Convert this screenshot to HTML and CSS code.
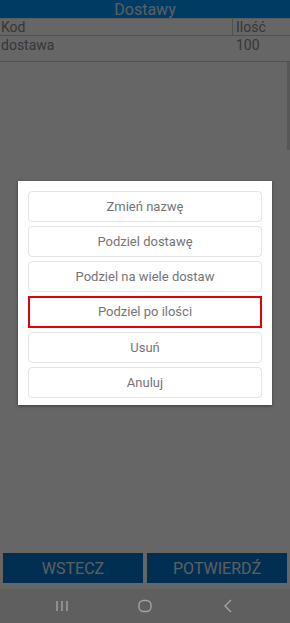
FILE: index.html
```html
<!DOCTYPE html>
<html>
    <head>
        <title>Dostawy</title>
        <link rel="stylesheet" href="styles.css">
    </head>
    <body>

        <div class="screen">

            <div class="app">
                <div class="title">Dostawy</div>

                <div class="table">
                    <div class="row head">
                        <div class="cell code">Kod</div>
                        <div class="cell qty">Ilość</div>
                    </div>
                    <div class="row">
                        <div class="cell code">dostawa</div>
                        <div class="cell qty">100</div>
                    </div>
                </div>

                <div class="spacer"></div>

                <div class="actions">
                    <div class="action">WSTECZ</div>
                    <div class="action">POTWIERDŹ</div>
                </div>

                <div class="scrollbar"></div>

                <div class="overlay">
                    <div class="dialog">
                        <div class="option">Zmień nazwę</div>
                        <div class="option">Podziel dostawę</div>
                        <div class="option">Podziel na wiele dostaw</div>
                        <div class="option selected">Podziel po ilości</div>
                        <div class="option">Usuń</div>
                        <div class="option">Anuluj</div>
                    </div>
                </div>
            </div>

            <div class="navbar">
                <svg width="14" height="14" viewBox="0 0 14 14">
                    <path d="M2 2v10M7 2v10M12 2v10" stroke="#a3a3a3" stroke-width="1.4" fill="none"/>
                </svg>
                <svg width="16" height="16" viewBox="0 0 16 16">
                    <rect x="2" y="2.5" width="12" height="11" rx="4.5" stroke="#a3a3a3" stroke-width="1.4" fill="none"/>
                </svg>
                <svg width="14" height="16" viewBox="0 0 14 16">
                    <path d="M10 2L4 8l6 6" stroke="#a3a3a3" stroke-width="1.4" fill="none"/>
                </svg>
            </div>

        </div>

    </body>
</html>
```

FILE: styles.css
```css
/** Page **/
html, body {
    margin: 0;
    padding: 0;
}
body {
    font-family: Roboto, "Noto Sans", sans-serif;
    background-color: #ffffff;
}
.screen {
    display: flex;
    flex-direction: column;
    width: 290px;
    height: 623px;
    overflow: hidden;
}

/** App **/
.app {
    position: relative;
    display: flex;
    flex-direction: column;
    height: 589px;
    background-color: #ffffff;
}
.title {
    height: 18px;
    line-height: 19px;
    background-color: #0094fa;
    color: #e4eef6;
    font-size: 16px;
    text-align: center;
    border-bottom: 1px solid #e6e6e6;
}

/** Table **/
.table .row {
    display: flex;
    border-bottom: 1px solid #c8c8c8;
}
.table .row.head {
    height: 16px;
}
.table .row:not(.head) {
    height: 25px;
}
.cell {
    font-size: 14px;
    color: #8a8a8a;
    line-height: 17px;
}
.cell.code {
    width: 232px;
    padding-left: 1px;
}
.cell.qty {
    flex: 1;
    padding-left: 3px;
}
.row.head .cell.code {
    border-right: 1px solid #c8c8c8;
    width: 231px;
}
.row:not(.head) .cell {
    line-height: 18px;
}

.spacer {
    flex: 1;
}

/** Bottom buttons **/
.actions {
    display: flex;
    gap: 4px;
    padding: 0 3px 6px;
}
.action {
    flex: 1;
    height: 30px;
    line-height: 31px;
    text-align: center;
    background-color: #0076cd;
    color: #e2edf5;
    font-size: 16px;
}

.scrollbar {
    position: absolute;
    right: 0;
    top: 62px;
    width: 3px;
    height: 88px;
    background-color: #d9d9d9;
}

/** Dialog **/
.overlay {
    position: absolute;
    left: 0;
    top: 0;
    width: 100%;
    height: 100%;
    background-color: rgba(0, 0, 0, 0.6);
    display: flex;
    align-items: center;
    justify-content: center;
}
.dialog {
    width: 234px;
    padding: 10px 10px 7px;
    margin-bottom: 3px;
    background-color: #ffffff;
    display: flex;
    flex-direction: column;
    gap: 4px;
    box-shadow: 0 1px 3px rgba(0, 0, 0, 0.4);
}
.option {
    height: 29px;
    line-height: 29px;
    border: 1px solid #e4e4e4;
    border-radius: 4px;
    text-align: center;
    font-size: 13px;
    color: #757575;
}
.option.selected {
    height: 28px;
    line-height: 28px;
    border: 2px solid #e60000;
    border-radius: 0;
}

/** Navigation bar **/
.navbar {
    flex: 1;
    display: flex;
    align-items: center;
    justify-content: center;
    gap: 68px;
    background-color: #5f5f5f;
}
.navbar svg {
    display: block;
}
```
